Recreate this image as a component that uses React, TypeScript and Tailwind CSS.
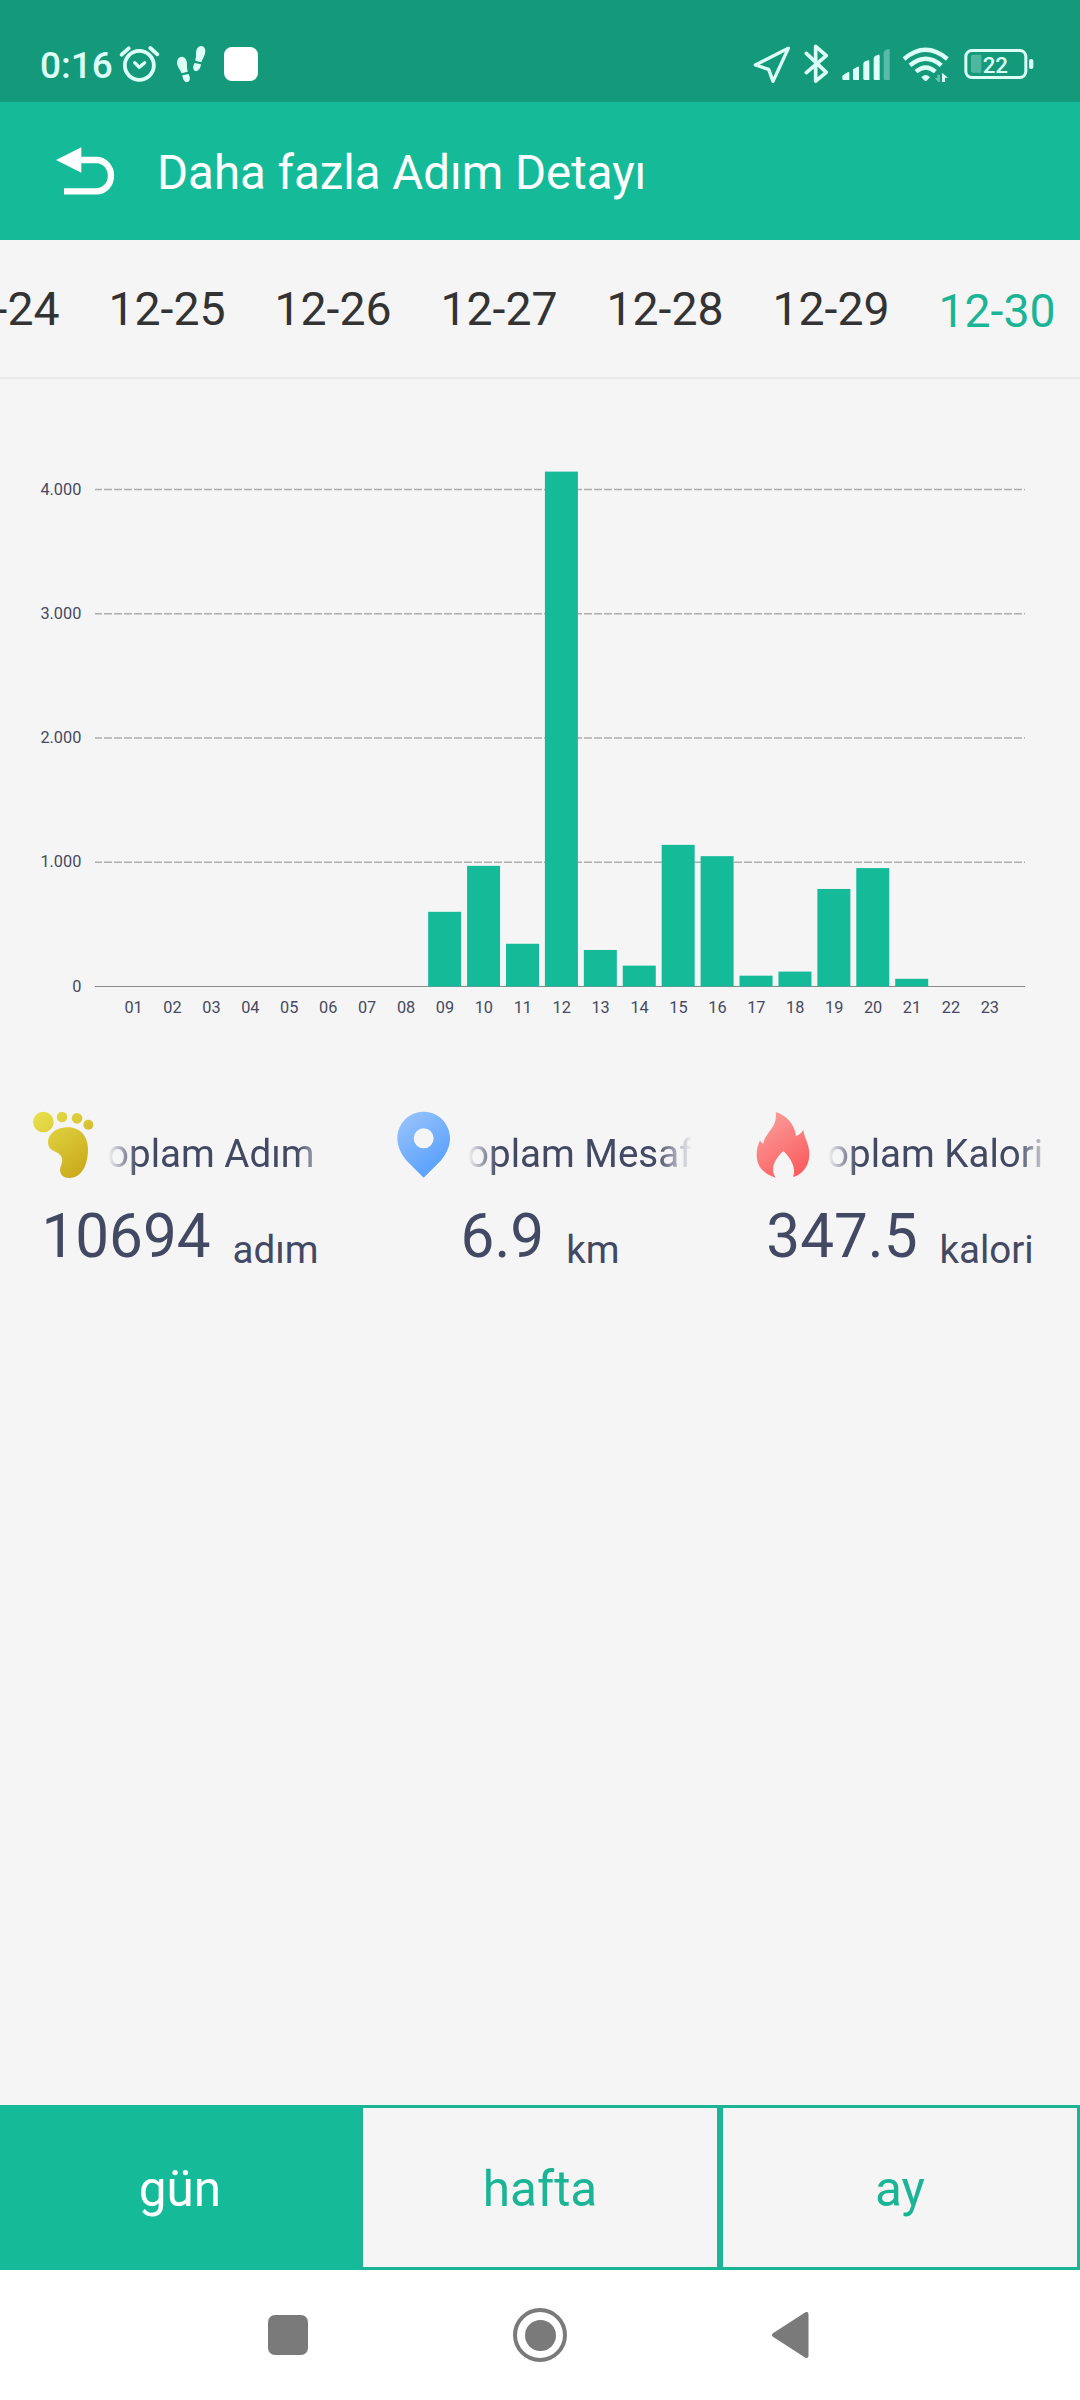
import { clsx } from 'clsx';

const DATES = ['12-24', '12-25', '12-26', '12-27', '12-28', '12-29', '12-30'];
const ACTIVE_DATE = '12-30';

// steps per hour, index 0 = 01:00
const HOURLY_STEPS = [
  0, 0, 0, 0, 0, 0, 0, 0, 601, 971, 344, 4144, 294, 168, 1140, 1049, 87, 120, 785, 953, 62, 0, 0,
];

const PERIODS = ['gün', 'hafta', 'ay'];

const CHART = { left: 95, right: 1025, base: 546.5, perThousand: 124.25, firstBar: 133.3, step: 38.92, bar: 33 };

/* ---------- status bar icons ---------- */

function AlarmIcon() {
  return (
    <svg viewBox="0 0 123 132" className="h-[44px] w-[41px]" fill="none" stroke="currentColor" strokeWidth="11.5" strokeLinecap="round">
      <circle cx="61" cy="70" r="43.5" />
      <path d="M8 38 L29 19 M94 18 L115 37" />
      <path d="M47 62 L61 76 L77 62" strokeWidth="10" strokeLinejoin="round" />
    </svg>
  );
}

function StepsIcon() {
  return (
    <svg viewBox="0 0 90 132" className="h-[44px] w-[30px]" fill="currentColor">
      <path d="M17 44 C27 43 34 55 33 68 C32 77 35 84 35 89 L17 94 C13 83 2 73 3 60 C4 50 9 45 17 44Z" />
      <path d="M19 100 L38 96 C43 108 43 117 35 120 C26 123 20 112 19 100Z" />
      <path d="M76 12 C66 11 59 23 60 36 C61 45 58 51 58 56 L76 61 C80 50 88 41 88 28 C88 19 84 13 76 12Z" />
      <path d="M75 67 L56 63 C50 72 50 83 57 87 C66 90 74 79 75 67Z" />
    </svg>
  );
}

function LocationIcon() {
  return (
    <svg viewBox="0 0 120 132" className="h-[44px] w-[40px]" fill="none" stroke="currentColor" strokeWidth="10" strokeLinejoin="round">
      <path d="M109 19 L10 69 L50 82 L63 118Z" />
    </svg>
  );
}

function BluetoothIcon() {
  return (
    <svg viewBox="0 0 81 132" className="h-[44px] w-[27px]" fill="none" stroke="currentColor" strokeWidth="11" strokeLinejoin="round" strokeLinecap="round">
      <path d="M10 34 L70 91 L38 117 V13 L70 41 L10 92" />
    </svg>
  );
}

function SignalIcon() {
  return (
    <svg viewBox="0 0 150 132" className="h-[44px] w-[50px]" fill="currentColor">
      <path d="M4 103 Q4 99 8 98 L20 91 Q25 88 25 94 V114 H8 Q4 114 4 110Z" />
      <path d="M36 82 L50 74 Q54 72 54 76 V114 H39 Q36 114 36 110Z" />
      <path d="M67 65 Q68 60 72 58 L81 55 Q85 54 85 59 V114 H71 Q67 114 67 110Z" />
      <path d="M98 48 Q99 43 104 41 L112 38 Q116 37 116 43 V114 H102 Q98 114 98 110Z" />
      <path d="M128 32 Q129 26 134 24 L143 21 Q146 20 146 26 V114 H132 Q128 114 128 110Z" opacity="0.35" />
    </svg>
  );
}

function WifiIcon() {
  return (
    <svg viewBox="0 0 144 132" className="h-[44px] w-[48px]" fill="none" stroke="currentColor" strokeWidth="13">
      <path d="M6 51 Q71 -4 136 51" />
      <path d="M24 70 Q71 30 118 70" />
      <path d="M42 89 Q71 64 100 89" />
      <path d="M58 106 Q71 92 84 106 L74 116 Q71 118 68 116Z" fill="currentColor" stroke="none" />
      <path d="M114 98 V120 H109 L98 108 H106 V98Z" fill="currentColor" stroke="none" opacity="0.4" />
      <path d="M120 120 V92 L138 107 H129 V120Z" fill="currentColor" stroke="none" />
    </svg>
  );
}

function BatteryIcon({ level }: { level: number }) {
  return (
    <svg viewBox="0 0 216 132" className="h-[44px] w-[72px]" fill="currentColor">
      <rect x="8.5" y="25.5" width="180" height="81" rx="18" fill="none" stroke="currentColor" strokeWidth="9" />
      <path d="M24 44 Q24 38 30 38 H55 V92 H30 Q24 92 24 86Z" opacity="0.3" />
      <rect x="198" y="51" width="13" height="30" rx="6" />
      <text x="97" y="93" fontSize="67" fontWeight="500" textAnchor="middle">{level}</text>
    </svg>
  );
}

function BackIcon() {
  return (
    <svg viewBox="0 0 180 150" className="h-[50px] w-[60px]" fill="none" stroke="currentColor">
      <path d="M3 42 L79 4 V80Z" fill="currentColor" stroke="none" />
      <path d="M76 42 H125 A43 47 0 0 1 125 136 H27" strokeWidth="19" />
    </svg>
  );
}

/* ---------- stat icons ---------- */

function FootIcon() {
  return (
    <svg viewBox="0 0 186 204" className="h-[68px] w-[62px] shrink-0" fill="url(#foot)">
      <defs>
        <linearGradient id="foot" gradientUnits="userSpaceOnUse" x1="10" y1="10" x2="160" y2="190">
          <stop offset="0" stopColor="#e8e04c" />
          <stop offset="1" stopColor="#c9a81a" />
        </linearGradient>
      </defs>
      <circle cx="34" cy="33" r="31" />
      <circle cx="90" cy="18" r="16" />
      <circle cx="135" cy="22" r="16" />
      <circle cx="169" cy="41" r="15" />
      <path d="M48 94 C48 66 76 49 107 49 C146 49 168 77 168 115 C168 160 150 201 113 201 C91 201 81 186 85 170 C90 155 95 143 84 131 C72 120 48 120 48 94Z" />
    </svg>
  );
}

function PinIcon() {
  return (
    <svg viewBox="0 0 186 204" className="h-[68px] w-[62px] shrink-0" fill="url(#pin)">
      <defs>
        <linearGradient id="pin" gradientUnits="userSpaceOnUse" x1="40" y1="20" x2="140" y2="150">
          <stop offset="0" stopColor="#93c1fb" />
          <stop offset="1" stopColor="#5fa3fb" />
        </linearGradient>
      </defs>
      <path
        fillRule="evenodd"
        d="M95 2 C139 2 174 38 174 82 C174 108 162 130 146 149 L95 200 L44 149 C28 130 16 108 16 82 C16 38 51 2 95 2Z M95 52 A30 30 0 1 0 95 112 A30 30 0 1 0 95 52Z"
      />
    </svg>
  );
}

function FlameIcon() {
  return (
    <svg viewBox="0 0 186 204" className="h-[68px] w-[62px] shrink-0" fill="url(#flame)">
      <defs>
        <linearGradient id="flame" gradientUnits="userSpaceOnUse" x1="40" y1="20" x2="150" y2="170">
          <stop offset="0" stopColor="#fa9c98" />
          <stop offset="1" stopColor="#fb5f62" />
        </linearGradient>
      </defs>
      <path d="M71 3 C100 11 128 38 132 75 C142 71 150 64 154 56 C156 80 172 97 172 129 C172 166 150 192 123 198 C135 170 112 136 94 120 C76 136 50 170 71 200 C38 191 14 168 14 131 C14 112 19 99 24 88 C26 93 29 96 34 98 C40 62 78 50 71 3Z" />
    </svg>
  );
}

/* ---------- sections ---------- */

function StatusBar() {
  return (
    <div className="flex h-[102px] items-start bg-[#14997b] pt-[42px] pr-[45px] pl-[40px] text-[#dcfff6]">
      <span className="mt-px w-[79px] text-[37px] leading-[45px] font-medium">0:16</span>
      <AlarmIcon />
      <span className="ml-4">
        <StepsIcon />
      </span>
      <span className="mt-[5px] ml-[18px] size-[34px] rounded-lg bg-white" />
      <div className="ml-auto flex">
        <LocationIcon />
        <span className="ml-[11px]">
          <BluetoothIcon />
        </span>
        <span className="ml-[11px]">
          <SignalIcon />
        </span>
        <span className="ml-[11px]">
          <WifiIcon />
        </span>
        <span className="ml-[13px]">
          <BatteryIcon level={22} />
        </span>
      </div>
    </div>
  );
}

function DateTabs() {
  return (
    <div className="flex h-[139px] justify-end overflow-hidden border-b-2 border-[#e8e8e8]">
      {DATES.map((date) => (
        <div
          key={date}
          className={clsx(
            'w-[166px] shrink-0 text-center text-[46.4px] leading-[56px]',
            date === ACTIVE_DATE ? 'pt-[43px] text-[#1bb595]' : 'pt-[41px] text-[#333333]',
          )}
        >
          {date}
        </div>
      ))}
    </div>
  );
}

function StepsChart() {
  const { left, right, base, perThousand, firstBar, step, bar } = CHART;
  return (
    <svg viewBox="0 0 1080 590" className="mt-[61px] h-[590px] w-[1080px] shrink-0" fontSize="16.3" fill="#46495f">
      {[1, 2, 3, 4].map((k) => (
        <line
          key={k}
          x1={left}
          x2={right}
          y1={base - k * perThousand}
          y2={base - k * perThousand}
          stroke="#adadad"
          strokeWidth="1.7"
          strokeDasharray="8 2"
          strokeDashoffset="1"
        />
      ))}
      {[0, 1, 2, 3, 4].map((k) => (
        <text key={k} x="81.3" y={base - k * perThousand + 5} textAnchor="end">
          {k === 0 ? '0' : `${k}.000`}
        </text>
      ))}
      <line x1={left} x2={right} y1={base} y2={base} stroke="#8c8c8c" strokeWidth="1.2" />
      {HOURLY_STEPS.map((steps, i) => {
        const cx = firstBar + i * step;
        const h = (steps / 1000) * perThousand;
        return (
          <g key={i}>
            {steps > 0 && <rect x={cx - bar / 2} y={base - h} width={bar} height={h} fill="#15bb99" />}
            <text x={cx + 0.3} y="573" textAnchor="middle">
              {String(i + 1).padStart(2, '0')}
            </text>
          </g>
        );
      })}
    </svg>
  );
}

interface StatProps {
  icon: React.ReactNode;
  label: string;
  value: string;
  unit: string;
}

function Stat({ icon, label, value, unit }: StatProps) {
  return (
    <div className="w-1/3">
      <div className="flex pl-8">
        {icon}
        {/* marquee label, faded at both ends */}
        <div className="mt-[20px] ml-[14px] h-[48px] w-[224px] overflow-hidden [mask-image:linear-gradient(to_right,transparent,black_30px,black_188px,transparent)]">
          <p className="-ml-[22px] text-[38.5px] leading-[45px] whitespace-nowrap">{label}</p>
        </div>
      </div>
      <div className="mt-[22px] flex items-start justify-center">
        <span className="text-[60.2px] leading-[71px]">{value}</span>
        <span className="mt-[26px] ml-[22px] text-[38.5px] leading-[45px]">{unit}</span>
      </div>
    </div>
  );
}

function PeriodTabs() {
  return (
    <div className="mt-auto flex h-[165px]">
      {PERIODS.map((period, i) => (
        <button
          key={period}
          className={clsx(
            'flex-1 border-3 pt-[3px] text-[49.5px] leading-[58px]',
            i === 0 ? 'border-[#15bb99] bg-[#15bb99] text-white' : 'border-[#1bb595] text-[#1bb595]',
          )}
        >
          {period}
        </button>
      ))}
    </div>
  );
}

function NavBar() {
  return (
    <div className="flex h-[130px] shrink-0 items-center bg-white pl-[268px]">
      <span className="size-[40px] rounded-[7px] bg-[#7a7a7a]" />
      <span className="ml-[205px] flex size-[54px] items-center justify-center rounded-full border-[4.5px] border-[#7a7a7a]">
        <span className="size-[31px] rounded-full bg-[#7a7a7a]" />
      </span>
      <svg viewBox="0 0 38 46" className="ml-[204px] h-[46px] w-[38px]" fill="#7a7a7a" stroke="#7a7a7a" strokeWidth="4" strokeLinejoin="round">
        <path d="M3 23 L35.5 2 V44Z" />
      </svg>
    </div>
  );
}

export default function App() {
  return (
    <div className="flex h-[2400px] w-[1080px] flex-col overflow-hidden bg-[#f5f5f5] font-['Roboto',sans-serif]">
      <StatusBar />
      <header className="flex h-[138px] items-center bg-[#15bb99] pl-[55px] text-white">
        <BackIcon />
        <h1 className="mt-[3px] ml-[42px] text-[47.4px] leading-[56px]">Daha fazla Adım Detayı</h1>
      </header>
      <DateTabs />
      <StepsChart />
      <div className="mt-[81px] flex text-[#434863]">
        <Stat icon={<FootIcon />} label="Toplam Adım" value="10694" unit="adım" />
        <Stat icon={<PinIcon />} label="Toplam Mesafe" value="6.9" unit="km" />
        <Stat icon={<FlameIcon />} label="Toplam Kalori" value="347.5" unit="kalori" />
      </div>
      <PeriodTabs />
      <NavBar />
    </div>
  );
}
